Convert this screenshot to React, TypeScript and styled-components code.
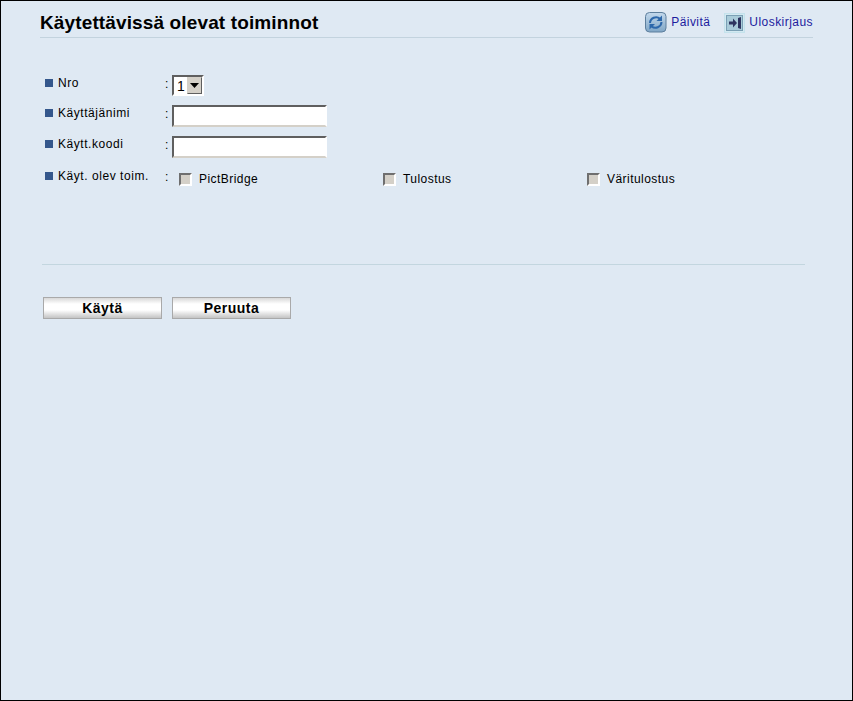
import React from 'react';
import styled, { createGlobalStyle } from 'styled-components';

const GlobalStyle = createGlobalStyle`
    html, body {
        margin: 0;
        padding: 0;
        height: 100%;
    }
    body {
        font-family: "Liberation Sans", Arial, sans-serif;
        font-size: 12px;
        color: #000;
    }
`;

const rows = ['Käyttäjänimi', 'Käytt.koodi'];

const functions = ['PictBridge', 'Tulostus', 'Väritulostus'];

const App = () => {
    return (
        <Page>
            <GlobalStyle />
            <Header>
                <Title>Käytettävissä olevat toiminnot</Title>
                <HeaderLinks>
                    <HeaderLink href="#">
                        <RefreshIcon />
                        Päivitä
                    </HeaderLink>
                    <HeaderLink href="#">
                        <LogoutIcon />
                        Uloskirjaus
                    </HeaderLink>
                </HeaderLinks>
            </Header>
            <Form>
                <Row>
                    <Label>Nro</Label>
                    <Colon>:</Colon>
                    <SelectBox>
                        <SelectValue>1</SelectValue>
                        <SelectArrow>
                            <svg width="9" height="5" viewBox="0 0 9 5">
                                <path d="M0 0h9L4.500 5z" fill="#000" />
                            </svg>
                        </SelectArrow>
                    </SelectBox>
                </Row>
                {rows.map((label) => (
                    <Row key={label} $top={9}>
                        <Label>{label}</Label>
                        <Colon>:</Colon>
                        <TextInput type="text" />
                    </Row>
                ))}
                <Row $top={10}>
                    <Label>Käyt. olev toim.</Label>
                    <Colon>:</Colon>
                    <Options>
                        {functions.map((name) => (
                            <Option key={name}>
                                <Check />
                                {name}
                            </Option>
                        ))}
                    </Options>
                </Row>
            </Form>
            <Divider />
            <Buttons>
                <ActionButton type="button">Käytä</ActionButton>
                <ActionButton type="button">Peruuta</ActionButton>
            </Buttons>
        </Page>
    );
};

const RefreshIcon = () => (
    <svg width="22" height="21" viewBox="0 0 22 21">
        <defs>
            <linearGradient id="refreshBg" x1="0" y1="0" x2="0" y2="1">
                <stop offset="0" stopColor="#c3d9ec" />
                <stop offset="1" stopColor="#7fa6c6" />
            </linearGradient>
        </defs>
        <rect x="0.500" y="0.500" width="20.500" height="19.500" rx="4" fill="url(#refreshBg)" stroke="#5d7f9d" />
        <path d="M5 11a6 6 0 0 1 10-4.200" fill="none" stroke="#2d68ab" strokeWidth="2" />
        <path d="M17 3.500v5.500h-5.500z" fill="#2d68ab" />
        <path d="M16.500 10a6 6 0 0 1-10 4.200" fill="none" stroke="#2d68ab" strokeWidth="2" />
        <path d="M4.500 17.500v-5.500h5.500z" fill="#2d68ab" />
    </svg>
);

const LogoutIcon = () => (
    <svg width="21" height="20" viewBox="0 0 21 20">
        <rect x="0.500" y="0.500" width="20" height="19" fill="#d3e9f1" stroke="#c4e2ec" />
        <rect x="2.500" y="2.500" width="16" height="15" fill="#a9cbd9" stroke="#7ba0b5" />
        <path d="M5 8.500h4v-3l4 4.500-4 4.500v-3h-4z" fill="#2e3560" />
        <path d="M14 5l3-1v12l-3-1z" fill="#2e3560" />
    </svg>
);

const Page = styled.div`
    box-sizing: border-box;
    width: 853px;
    height: 701px;
    padding: 0 39px 0 40px;
    background-color: #dfe9f3;
    border: 1px solid #000;
    overflow: hidden;
`;

const Header = styled.div`
    display: flex;
    justify-content: space-between;
    align-items: flex-end;
    height: 36px;
    border-bottom: 1px solid #c3d3de;
    margin-left: -1px;
`;

const Title = styled.h1`
    margin: 0 0 3px;
    font-size: 19px;
    line-height: 22px;
    letter-spacing: 0.13px;
    font-weight: bold;
    color: #000;
`;

const HeaderLinks = styled.div`
    display: flex;
    gap: 14px;
    margin-bottom: 4px;
`;

const HeaderLink = styled.a`
    display: flex;
    align-items: center;
    gap: 4px;
    font-size: 12px;
    line-height: 21px;
    letter-spacing: 0.45px;
    color: #1c1c9e;
    text-decoration: none;
`;

const Form = styled.div`
    display: flex;
    flex-direction: column;
    padding: 37px 0 0 4px;
`;

const Row = styled.div<{ $top?: number }>`
    display: flex;
    align-items: flex-start;
    margin-top: ${(props) => props.$top ?? 0}px;
`;

const Label = styled.div`
    display: flex;
    align-items: center;
    gap: 5px;
    width: 120px;
    height: 16px;
    white-space: nowrap;
    letter-spacing: 0.55px;

    &::before {
        content: '';
        width: 8px;
        height: 8px;
        background-color: #34578c;
    }
`;

const Colon = styled.div`
    width: 7px;
    line-height: 18px;
`;

const SelectBox = styled.div`
    box-sizing: border-box;
    display: flex;
    width: 32px;
    height: 21px;
    background-color: #fff;
    border: 2px solid;
    border-color: #5f5f5f #fff #fff #5f5f5f;
`;

const SelectValue = styled.span`
    flex: 1;
    padding-left: 3px;
    font-size: 14px;
    line-height: 18px;
`;

const SelectArrow = styled.span`
    display: flex;
    align-items: center;
    justify-content: center;
    width: 15px;
    background-color: #d4d0c8;
    border: 1px solid;
    border-color: #d4d0c8 #5f5f5f #5f5f5f #d4d0c8;
    box-sizing: border-box;
`;

const TextInput = styled.input`
    box-sizing: border-box;
    width: 155px;
    height: 22px;
    padding: 1px 2px;
    margin: 0;
    background-color: #fff;
    border: 2px solid;
    border-color: #5f5f5f #fff #d4d0c8 #5f5f5f;
    border-radius: 0;
    outline: 0;
    font-family: "Liberation Sans", Arial, sans-serif;
    font-size: 12px;
`;

const Options = styled.div`
    display: flex;
    padding: 4px 0 0 7px;
`;

const Option = styled.label`
    display: flex;
    align-items: center;
    gap: 7px;
    width: 204px;
    line-height: 14px;
    letter-spacing: 0.45px;
`;

const Check = styled.span`
    box-sizing: border-box;
    width: 13px;
    height: 13px;
    background-color: #d4d0c8;
    border: 2px solid;
    border-color: #6f6f6f #fff #fff #6f6f6f;
`;

const Divider = styled.div`
    width: 763px;
    height: 1px;
    margin: 78px 0 0 1px;
    background-color: #c3d6df;
`;

const Buttons = styled.div`
    display: flex;
    gap: 10px;
    padding: 32px 0 0 2px;
`;

const ActionButton = styled.button`
    box-sizing: border-box;
    width: 119px;
    height: 22px;
    padding: 0;
    border: 1px solid #a9a9a9;
    background: linear-gradient(to bottom, #d8d8d8 0%, #ffffff 30%, #ffffff 60%, #c4c4c4 100%);
    font-family: "Liberation Sans", Arial, sans-serif;
    font-size: 14px;
    font-weight: bold;
    letter-spacing: 0.5px;
    color: #000;
`;

export default App;
